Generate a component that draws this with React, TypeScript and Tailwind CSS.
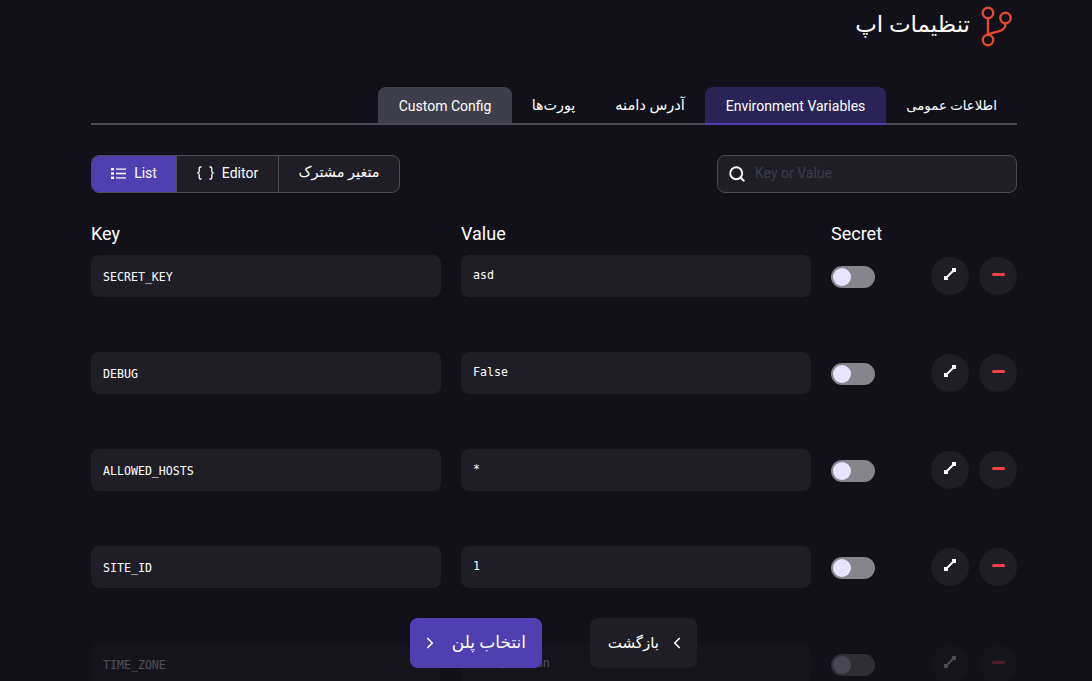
import { ChevronLeft, ChevronRight, Search } from 'lucide-react';

const PERSIAN = "font-['Roboto','DejaVu_Sans',sans-serif]";

const rows = [
  { name: 'SECRET_KEY', value: 'asd' },
  { name: 'DEBUG', value: 'False' },
  { name: 'ALLOWED_HOSTS', value: '*' },
  { name: 'SITE_ID', value: '1' },
  { name: 'TIME_ZONE', value: 'Asia/Tehran' },
];

function Logo() {
  return (
    <svg width="36" height="42" viewBox="0 0 36 42" fill="none" stroke="#e5492f" strokeWidth="2.4" strokeLinecap="round">
      <circle cx="10" cy="8" r="5.2" />
      <circle cx="27.5" cy="13" r="5.2" />
      <circle cx="10" cy="35" r="5.2" />
      <path d="M10 13.2V29.8" />
      <path d="M27.5 18.2c0 5-2 7-7 8.2l-5.5 1.4c-2.5 0.6-4 1.2-5 2.2" />
    </svg>
  );
}

function ListIcon() {
  return (
    <svg width="15" height="13" viewBox="0 0 15 13" fill="none">
      <rect x="0" y="1" width="3" height="2.4" fill="#ffffff" />
      <rect x="0" y="5.3" width="3" height="2.4" fill="#ffffff" />
      <rect x="0" y="9.6" width="3" height="2.4" fill="#ffffff" />
      <path d="M5 2.2H15M5 6.5H15M5 10.8H15" stroke="#ffffff" strokeWidth="1.3" />
    </svg>
  );
}

function BracesIcon() {
  return (
    <svg width="17" height="14" viewBox="0 0 17 14" fill="none" stroke="#ffffff" strokeWidth="1.3">
      <path d="M4.5 1H3.4C2.6 1 2.2 1.5 2.2 2.2V5.2C2.2 6 1.7 6.7 .8 7C1.7 7.3 2.2 8 2.2 8.8V11.8C2.2 12.5 2.6 13 3.4 13H4.5" />
      <path d="M12.5 1H13.6C14.4 1 14.8 1.5 14.8 2.2V5.2C14.8 6 15.3 6.7 16.2 7C15.3 7.3 14.8 8 14.8 8.8V11.8C14.8 12.5 14.4 13 13.6 13H12.5" />
    </svg>
  );
}

function ExpandIcon() {
  return (
    <svg width="12" height="12" viewBox="0 0 12 12" className="mb-[4px]">
      <rect x="8" y="0" width="4" height="4" fill="#ffffff" />
      <rect x="0" y="8" width="4" height="4" fill="#ffffff" />
      <path d="M3 9L9 3" stroke="#ffffff" strokeWidth="2" />
    </svg>
  );
}

function EnvRow({ name, value }: { name: string; value: string }) {
  return (
    <div className="flex items-center h-[42px] mb-[55px]">
      <div className="w-[350px] h-full rounded-lg bg-[#1f1e27] px-3 pt-[3px] flex items-center font-['DejaVu_Sans_Mono',monospace] text-[11.6px] text-white">
        {name}
      </div>
      <div className="w-[350px] h-full ml-5 rounded-lg bg-[#1f1e27] px-3 pb-[1px] flex items-center font-['DejaVu_Sans_Mono',monospace] text-[11.6px] text-white">
        {value}
      </div>
      <div className="ml-5 w-11 h-[22px] mt-[2px] rounded-full bg-[#85858c] flex items-center pl-[2px]">
        <div className="w-[18px] h-[18px] rounded-full bg-[#e8e4ff]" />
      </div>
      <button className="ml-auto w-[38px] h-[38px] rounded-full bg-[#1f1e27] flex items-center justify-center">
        <ExpandIcon />
      </button>
      <button className="ml-[10px] w-[38px] h-[38px] rounded-full bg-[#1f1e27] flex items-center justify-center">
        <span className="w-[13px] h-[3px] mb-[4px] rounded-sm bg-[#f6414b]" />
      </button>
    </div>
  );
}

export default function App() {
  return (
    <div className="relative h-[681px] overflow-hidden bg-[#12111a] text-white font-['Roboto',sans-serif] pl-[91px] pr-[75px]">
      <header dir="rtl" className="flex items-start gap-2 pt-[5px] h-[87px]">
        <div className="mr-[3px]">
          <Logo />
        </div>
        <span className={`${PERSIAN} text-[23px] leading-[40px]`}>تنظیمات اپ</span>
      </header>

      <nav dir="rtl" className={`${PERSIAN} flex items-stretch h-[38px] border-b-2 border-[#4b4a57] text-[14px]`}>
        <div className="flex items-center justify-center w-[131px] h-[36px] pt-[2px] text-[13.3px] whitespace-nowrap">اطلاعات عمومی</div>
        <div className="flex items-center justify-center w-[181px] h-[38px] pt-[2px] rounded-t-lg bg-[#2a2358] border-b-2 border-[#4f3fb0] font-[450]">Environment Variables</div>
        <div className="flex items-center justify-center w-[110px] h-[36px] pt-[2px] text-[14.6px] whitespace-nowrap">آدرس دامنه</div>
        <div className="flex items-center justify-center w-[83px] h-[36px] pt-[2px] text-[14.3px] whitespace-nowrap">پورت‌ها</div>
        <div className="flex items-center justify-center w-[134px] h-[36px] pt-[2px] rounded-t-lg bg-[#3f3e4b] font-[450]">Custom Config</div>
      </nav>

      <div className="flex items-center justify-between mt-[30px] h-[38px]">
        <div className="flex h-full w-[309px] rounded-lg border border-[#4b4a57] bg-[#1f1e27] overflow-hidden text-[14px] font-[450] pb-[2px]">
          <div className="w-[85px] mb-[-2px] pb-[2px] flex items-center justify-center gap-2 bg-[#4f3fb0] border-r border-[#4b4a57]">
            <ListIcon />
            List
          </div>
          <div className="w-[102px] mb-[-2px] pb-[2px] flex items-center justify-center gap-2 border-r border-[#4b4a57]">
            <BracesIcon />
            Editor
          </div>
          <div dir="rtl" className={`${PERSIAN} flex-1 flex items-center justify-center text-[14.5px] font-normal`}>متغیر مشترک</div>
        </div>
        <div className="w-[300px] h-full rounded-lg border border-[#4b4a57] bg-[#1f1e27] flex items-center pl-[10px] gap-[9px]">
          <Search size={18} strokeWidth={2.5} color="#ffffff" />
          <span className="text-[14px] text-[#3d3d4d] pb-[2px]">Key or Value</span>
        </div>
      </div>

      <div className="flex items-center mt-[27px] h-[26px] text-[18px]">
        <span className="w-[370px]">Key</span>
        <span className="w-[370px]">Value</span>
        <span>Secret</span>
      </div>
      <div className="mt-[9px]">
        {rows.map((row) => (
          <EnvRow key={row.name} name={row.name} value={row.value} />
        ))}
      </div>

      <div className="absolute left-0 right-0 bottom-0 h-[85px] bg-gradient-to-b from-[#12111a]/0 via-[#12111a]/75 to-[#12111a]/75 pointer-events-none" />
      <div dir="rtl" className={`${PERSIAN} absolute bottom-[13px] left-[91px] right-[76px] flex justify-center gap-12`}>
        <button className="flex items-center gap-[9px] w-[107px] h-[50px] pr-[11px] rounded-lg bg-[#1f1e27] text-[15px]">
          <ChevronLeft size={18} strokeWidth={2.2} />
          بازگشت
        </button>
        <button className="flex items-center justify-between w-[132px] h-[50px] pl-[11px] pr-[16px] rounded-lg bg-[#4f3fb0] text-[17px]">
          انتخاب پلن
          <ChevronRight size={18} strokeWidth={2.2} />
        </button>
      </div>
    </div>
  );
}
